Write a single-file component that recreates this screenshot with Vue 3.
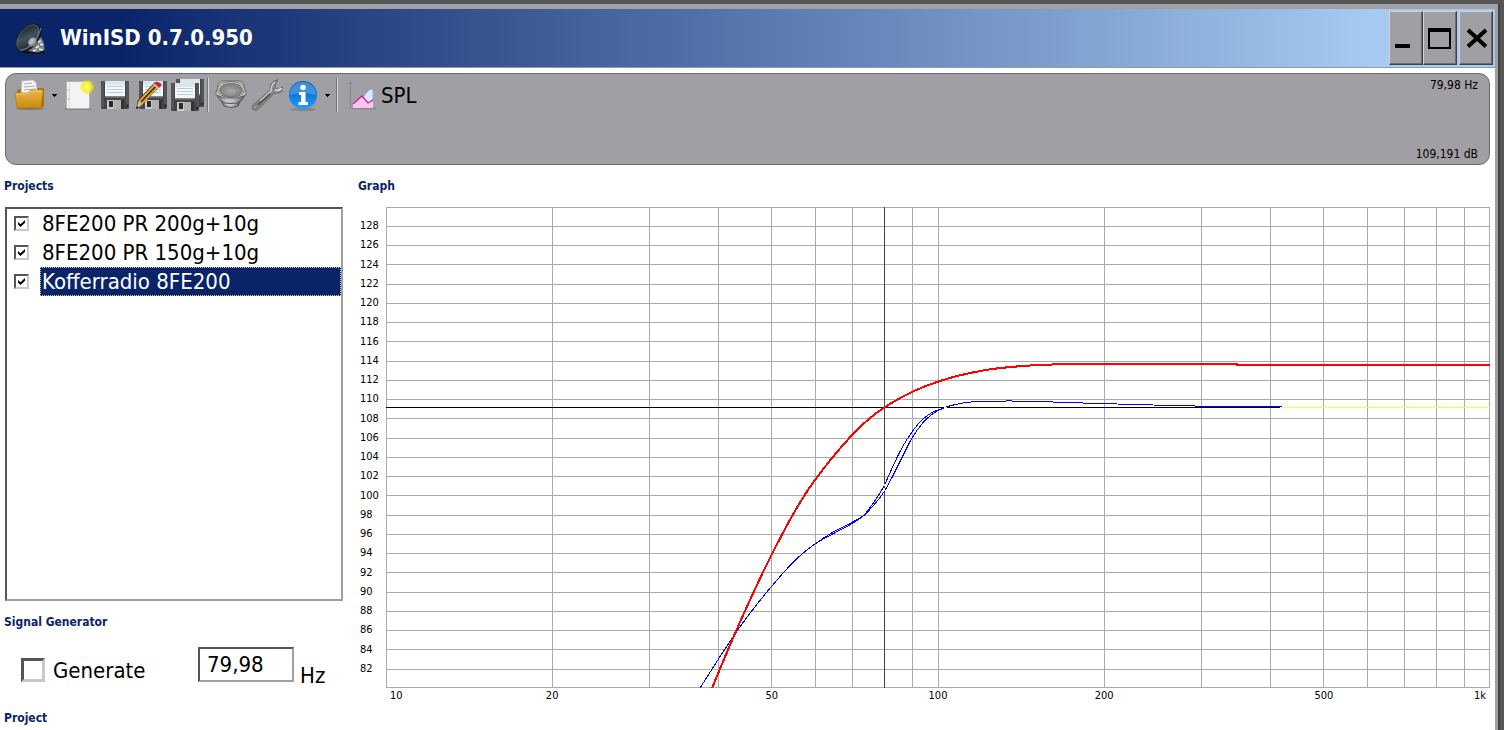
<script setup>
import { ref } from 'vue'

const projects = ref([
  { name: '8FE200 PR 200g+10g', shown: true },
  { name: '8FE200 PR 150g+10g', shown: true },
  { name: 'Kofferradio 8FE200', shown: true }
])
const selected = ref(2)
const generate = ref(false)
const frequency = ref('79,98')

const W = 1104
const H = 481
const xOf = (f) => Math.round((Math.log10(f) - 1) * 551.5) + 0.5
const freqs = [10, 20, 30, 40, 50, 60, 70, 80, 90, 100, 200, 300, 400, 500, 600, 700, 800, 900, 1000]
const vLines = freqs.filter((f) => f !== 80).map(xOf)
const levels = Array.from({ length: 24 }, (_, i) => 128 - 2 * i)
const yOf = (db) => Math.floor((130 - db) * 9.63) + 0.5
const hLines = [0.5, ...levels.map(yOf), 480.5]
const xLabels = [
  { text: '10', f: 10, edge: 'first' },
  { text: '20', f: 20 },
  { text: '50', f: 50 },
  { text: '100', f: 100 },
  { text: '200', f: 200 },
  { text: '500', f: 500 },
  { text: '1k', f: 1000, edge: 'last' }
].map((l) => ({ ...l, left: ((Math.log10(l.f) - 1) * 50) + '%' }))

// Cubic curve through the points, with tangents weighted by the spacing.
const smooth = (pts) => {
  const n = pts.length
  const slope = (i) => (pts[i + 1][1] - pts[i][1]) / (pts[i + 1][0] - pts[i][0])
  const tangent = (i) => {
    if (i === 0) return slope(0)
    if (i === n - 1) return slope(n - 2)
    const a = pts[i][0] - pts[i - 1][0]
    const b = pts[i + 1][0] - pts[i][0]
    return (slope(i - 1) * b + slope(i) * a) / (a + b)
  }
  let d = `M${pts[0][0]} ${pts[0][1]}`
  for (let i = 0; i < n - 1; i++) {
    const [x1, y1] = pts[i]
    const [x2, y2] = pts[i + 1]
    const h = (x2 - x1) / 3
    d += `C${x1 + h} ${y1 + tangent(i) * h} ${x2 - h} ${y2 - tangent(i + 1) * h} ${x2} ${y2}`
  }
  return d
}
const red = smooth([[326, 481], [350.5, 423], [385.5, 348], [418, 289], [446, 251], [484, 211], [526, 185], [553, 174.3], [600, 163], [647, 158.3], [700, 157], [760, 157], [851, 157]]) + 'V158H1104'
const head = [[314, 481], [332.5, 452], [351, 424], [385.5, 379.5], [412, 350.5], [429, 337]]
const tail = [[557, 201.3], [574, 196.5], [587, 194.8], [601, 194.2], [620, 194], [640, 194.2], [667, 195], [697, 196], [731, 197], [767, 198], [817, 199.2], [896, 199.5]]
const blueA = smooth([...head, [446, 327.3], [466, 316.5], [478, 308.3], [487, 299], [498.5, 284], [507, 268.5], [517, 248.5], [526, 231], [537, 215.7], [547, 206.5], ...tail])
const blueB = smooth([...head, [446, 325.7], [466, 315.3], [478, 308], [487, 296.5], [498.5, 278], [507, 259], [517, 239], [526, 225], [537, 212], [547, 205], ...tail])
</script>

<template>
  <div class="desktop">
    <div class="window">
      <header class="titlebar">
        <svg class="app-icon" viewBox="0 0 32 32" aria-hidden="true">
          <defs>
            <linearGradient id="cone" x1="0" y1="0" x2="1" y2="1">
              <stop offset="0" stop-color="#10161c" />
              <stop offset=".5" stop-color="#41535f" />
              <stop offset="1" stop-color="#161d24" />
            </linearGradient>
          </defs>
          <path d="M4 30 Q15 33 30 31 L30 26 L27 15 L18 20z" fill="#111" />
          <path d="M19 22 L27 15 L30 21 L30.500 28 L24 30.500 L14 29z" fill="#77828a" />
          <path d="M24 20l3-1M26 22l3 1M22 26l3-2M25 27l4 1M19 29l3-1" stroke="#eee" stroke-width="1.800" />
          <ellipse cx="14.500" cy="15.500" rx="10" ry="16" transform="rotate(38 14.500 15.500)" fill="#15191c" />
          <ellipse cx="13.800" cy="15.300" rx="8.300" ry="14.500" transform="rotate(38 13.800 15.300)" fill="url(#cone)" stroke="#606d74" stroke-width=".7" />
          <path d="M6 29 Q22 25 27 6" fill="none" stroke="#8a979d" stroke-width=".8" />
          <ellipse cx="18.500" cy="20" rx="4" ry="5" transform="rotate(38 18.500 20)" fill="#85898f" />
          <ellipse cx="17.800" cy="19.300" rx="2.500" ry="3.500" transform="rotate(38 17.800 19.300)" fill="#b9b8bc" />
        </svg>
        <h1 class="title">WinISD 0.7.0.950</h1>
        <div class="window-buttons">
          <button class="winbtn" type="button" aria-label="Minimize">
            <svg viewBox="0 0 24 24" aria-hidden="true"><path d="M1 18h15v4H1z" /></svg>
          </button>
          <button class="winbtn" type="button" aria-label="Maximize">
            <svg viewBox="0 0 24 24" aria-hidden="true"><path fill-rule="evenodd" d="M0 2h23v21H0z M2 6v15h19V6z" /></svg>
          </button>
          <button class="winbtn close" type="button" aria-label="Close">
            <svg viewBox="0 0 24 24" aria-hidden="true"><path d="M4 4L22 20.500M22 4L4 20.500" stroke="#000" stroke-width="4" /></svg>
          </button>
        </div>
      </header>

      <div class="toolbar">
        <div class="tools">
          <button class="tool" type="button" aria-label="Open project">
            <svg viewBox="0 0 32 32" aria-hidden="true">
              <defs>
                <linearGradient id="folder" x1="0" y1="0" x2="0" y2="1">
                  <stop offset="0" stop-color="#e9b54c" />
                  <stop offset="1" stop-color="#c88c0c" />
                </linearGradient>
              </defs>
              <ellipse cx="16" cy="29.500" rx="14" ry="1.500" fill="#77777b" />
              <path d="M3 13l1-3h4l2 3 12-4h7q1 0 1 1v18H3z" fill="#a8730c" />
              <path d="M7 15L8 2l11-1 3 3 2 12z" fill="#f7f7fb" stroke="#bcbcc4" stroke-width=".8" />
              <path d="M10 5l8-1M10 8l11-1M10 11l12-1" stroke="#a9a9b0" stroke-width="1" />
              <path d="M1 15q0-1 1-1h12l3-3h10q2 0 2 1l-2 16q0 1-1 1H4q-1 0-1-1z" fill="url(#folder)" stroke="#b67c0a" stroke-width=".8" />
              <path d="M2 15h12l3-3h11" fill="none" stroke="#f4cf7c" stroke-width="1" />
            </svg>
          </button>
          <button class="arrow" type="button" aria-label="Recent projects"><svg viewBox="0 0 5 3" aria-hidden="true"><path d="M0 0h5v1H4v1H3v1H2V2H1V1H0z" /></svg></button>
          <button class="tool" type="button" aria-label="New project">
            <svg viewBox="0 0 32 32" aria-hidden="true">
              <defs>
                <radialGradient id="glow"><stop offset="0" stop-color="#ffffb0" /><stop offset=".3" stop-color="#fff64a" /><stop offset=".65" stop-color="#f7ef12" stop-opacity=".85" /><stop offset="1" stop-color="#f0e800" stop-opacity="0" /></radialGradient>
              </defs>
              <path d="M2 29h26v1.500H2z" fill="#707074" />
              <path d="M3.500 2.500h23v27h-23z" fill="#f3f3f3" stroke="#b5b5b5" />
              <path d="M6.500 3v26" stroke="#dedede" />
              <circle cx="5.500" cy="11" r=".8" fill="#aaa" /><circle cx="5.500" cy="20" r=".8" fill="#aaa" />
              <circle cx="24" cy="8" r="7.500" fill="url(#glow)" />
            </svg>
          </button>
          <button class="tool" type="button" aria-label="Save">
            <svg viewBox="0 0 32 32" aria-hidden="true">
              <defs>
                <g id="floppy">
                  <path d="M2 2h27l1 1v26l-1 1H3l-1-1z" fill="#454547" />
                  <path d="M2 2h3v26H2zM27 2h3v23h-3z" fill="#555558" />
                  <path d="M6 2h20v15H6z" fill="#f4f7fa" />
                  <path d="M6 2h20v4H6z" fill="#dbe7f0" />
                  <path d="M8 7.500h16M8 10.500h16M8 13.500h16" stroke="#b9cddd" />
                  <path d="M6 17h20v1.500H6z" fill="#858588" />
                  <path d="M8 21h14v9H8z" fill="#c9c9c9" />
                  <path d="M10 22h4v6h-4z" fill="#29292b" />
                  <path d="M15 21h7v9h-7z" fill="#b0b0b1" />
                  <path d="M22 21h3v9h-3z" fill="#333335" />
                  <circle cx="28" cy="27" r="1" fill="#222" />
                </g>
              </defs>
              <use href="#floppy" />
            </svg>
          </button>
          <button class="tool" type="button" aria-label="Save as">
            <svg viewBox="0 0 32 32" aria-hidden="true">
              <use href="#floppy" x="2" />
              <path d="M1 30l2-9L20 3l5 4L8 25z" fill="#262522" />
              <path d="M4 21L20 4l4 3.500L8 25z" fill="#eba51b" />
              <path d="M6 23L22 6" stroke="#302b20" stroke-width="1.600" />
              <path d="M1 30l3-9 4 4z" fill="#e5bd7d" /><path d="M1 30l1-3 2 2z" fill="#111" />
              <path d="M19 5l2-2q1-1 4 1t1 3l-2 2z" fill="#d0202c" /><path d="M18 6l1.500-1.500 4.500 4-1.500 1.500z" fill="#bdbdbd" />
            </svg>
          </button>
          <button class="tool" type="button" aria-label="Save all">
            <svg viewBox="0 0 36 32" aria-hidden="true">
              <use href="#floppy" x="5" y="-2" />
              <use href="#floppy" x="0" y="2" />
            </svg>
          </button>
          <span class="separator"></span>
          <button class="tool" type="button" aria-label="Drivers">
            <svg viewBox="0 0 32 32" aria-hidden="true">
              <defs>
                <linearGradient id="metal" x1="0" x2="1"><stop offset="0" stop-color="#666" /><stop offset=".35" stop-color="#c9c9c9" /><stop offset=".6" stop-color="#bbb" /><stop offset="1" stop-color="#555" /></linearGradient>
              </defs>
              <path d="M6 21l3 6q7 3 14 0l3-6z" fill="url(#metal)" stroke="#4d4d4d" />
              <path d="M2 13l1 5q3 5 7 6 6 1 12 0 4-1 7-6l1-5z" fill="url(#metal)" stroke="#555" />
              <path d="M3 5l4-3h18l4 3v3l2 5v3l-3 1-6 2H10l-6-2-3-1v-3l2-5z" fill="#c6c6c6" stroke="#555" stroke-width=".8" />
              <ellipse cx="16" cy="10.500" rx="13.500" ry="8" fill="#dadada" stroke="#5d5d5d" stroke-width=".8" />
              <ellipse cx="16" cy="11" rx="11.500" ry="6.800" fill="#858585" stroke="#666" stroke-width=".8" />
              <ellipse cx="16" cy="12" rx="9" ry="5" fill="#909090" />
              <ellipse cx="16" cy="12" rx="5" ry="2.500" fill="#a2a2a2" />
            </svg>
          </button>
          <button class="tool" type="button" aria-label="Options">
            <svg viewBox="0 0 32 32" aria-hidden="true">
              <path d="M2.500 31q-2.500-1.500-1-4.500L19 11q0-7 4-9l4-1.500-3 6 1 3 3 1 4-3q0 5-3 6t-6 1L8 29.500q-3 3-5.500 1.500z" fill="#858585" stroke="#666" stroke-width=".8" />
              <path d="M9 22L20 12q0-6 4-9" fill="none" stroke="#d5d5d5" stroke-width="1.300" />
              <path d="M24 11l3 .5 4-2" fill="none" stroke="#e6e6e6" stroke-width="1.500" />
              <path d="M7 26L19 15" stroke="#555" stroke-width="1.800" />
              <circle cx="4" cy="28" r="1.300" fill="#ccc" stroke="#555" stroke-width=".6" />
            </svg>
          </button>
          <button class="tool" type="button" aria-label="Information">
            <svg viewBox="0 0 32 32" aria-hidden="true">
              <defs><linearGradient id="info" x1="0" y1="0" x2="0" y2="1"><stop offset="0" stop-color="#1666bb" /><stop offset=".5" stop-color="#0b79db" /><stop offset="1" stop-color="#22a0ff" /></linearGradient></defs>
              <ellipse cx="16" cy="30.500" rx="13" ry="1.500" fill="#828287" />
              <circle cx="16" cy="16" r="14" fill="url(#info)" />
              <path d="M3 16a13 13 0 0 1 26 0q-13-4-26 0z" fill="#6fb2ee" opacity=".5" />
              <circle cx="16" cy="8.500" r="2.800" fill="#fff" />
              <path d="M12 13h6.500v10H21v3h-9.500v-3H14v-7h-2z" fill="#fff" />
            </svg>
          </button>
          <button class="arrow" type="button" aria-label="More information"><svg viewBox="0 0 5 3" aria-hidden="true"><path d="M0 0h5v1H4v1H3v1H2V2H1V1H0z" /></svg></button>
          <span class="separator"></span>
          <button class="plot-type" type="button">
            <svg viewBox="0 0 28 30" aria-hidden="true">
              <path d="M1.500 2v26.500H27M0 4l1.500-2L3 4M25 27l2 1.500-2 1.500M0 8h1M0 13h1M0 18h1M0 23h1M6.500 29v1M11.500 29v1M16.500 29v1M21.500 29v1" fill="none" stroke="#87878c" />
              <path d="M14 17L19 11q2-2 5-2v11l-6 4z" fill="#dfe8ff" stroke="#75a4ee" stroke-width=".8" />
              <path d="M4 28v-5l9-7 6 7 5-3v8z" fill="#fbc4ea" />
              <path d="M4 24l9-8 6 7 5-3" fill="none" stroke="#cc1aa0" stroke-width="1.300" />
            </svg>
            <span>SPL</span>
          </button>
        </div>
        <div class="readout">
          <output>79,98 Hz</output>
          <output>109,191 dB</output>
        </div>
      </div>

      <main class="content">
        <aside class="side">
          <h2 class="caption">Projects</h2>
          <ul class="projects">
            <li v-for="(p, i) in projects" :key="p.name" class="project">
              <input :id="'show' + i" v-model="p.shown" class="tick" type="checkbox" />
              <label :for="'show' + i" class="name" :class="{ selected: i === selected }">{{ p.name }}</label>
            </li>
          </ul>
          <h2 class="caption second">Signal Generator</h2>
          <div class="generator">
            <input id="generate" v-model="generate" class="tick large" type="checkbox" />
            <label for="generate">Generate</label>
            <input id="freq" v-model="frequency" class="freq" type="text" />
            <label for="freq" class="unit">Hz</label>
          </div>
          <h2 class="caption third">Project</h2>
        </aside>

        <section class="graph">
          <h2 class="caption">Graph</h2>
          <div class="chart">
            <div class="y-axis"><span v-for="l in levels" :key="l">{{ l }}</span></div>
            <svg class="plot" :viewBox="`0 0 ${W} ${H}`" preserveAspectRatio="none" role="img" aria-label="SPL">
              <g class="grid">
                <line v-for="x in vLines" :key="'v' + x" :x1="x" :x2="x" y1="0" :y2="H" />
                <line v-for="y in hLines" :key="'h' + y" x1="0" :x2="W" :y1="y" :y2="y" />
              </g>
              <path class="cursor-v" d="M498.500 0V481" />
              <path class="cursor-h" d="M0 200.500H894" />
              <path class="cursor-over" d="M896 200.500H1104" />
              <path class="blue" :d="blueA" />
              <path class="blue" :d="blueB" />
              <path class="red" :d="red" />
              <path class="cursor-over" d="M498.500 277v2M498.500 281v3M558 200.500h3" />
            </svg>
            <div class="x-axis">
              <span v-for="l in xLabels" :key="l.f" :class="l.edge" :style="{ left: l.left }">{{ l.text }}</span>
            </div>
          </div>
        </section>
      </main>
    </div>
  </div>
</template>

<style>
body { margin: 0; background: #555; }
</style>

<style scoped>
.desktop {
  box-sizing: border-box;
  height: 100vh;
  padding: 4px 4px 0 0;
  overflow: hidden;
  background: #555;
  color: #000;
  font-family: "DejaVu Sans Condensed", "DejaVu Sans", sans-serif;
  font-size: 22px;
}
.window {
  box-sizing: border-box;
  min-height: 100%;
  margin-right: 2px;
  border-top: 5px solid #a09fa4;
  border-right: 3px solid #a09fa4;
  box-shadow: 2px 0 0 #414043;
  background: #fff;
}
.titlebar {
  display: flex;
  align-items: center;
  height: 58px;
  padding: 0 2px 0 14px;
  border-bottom: 1px solid #8c9ab5;
  background: linear-gradient(90deg, #0a246a 8%, #a6caf0 92%);
}
.app-icon { width: 32px; height: 32px; }
.title { margin: 0 0 0 14px; color: #fff; font-size: 22px; line-height: 28px; font-weight: 700; }
.window-buttons { display: flex; margin-left: auto; }
.winbtn {
  box-sizing: border-box;
  display: grid;
  place-items: center;
  width: 34px;
  height: 54px;
  padding: 0;
  border: 1px solid;
  border-color: #d4d0d8 #414043 #414043 #d4d0d8;
  box-shadow: inset -1px -1px 0 #6b6b70;
  border-radius: 0;
  background: #a09fa4;
}
.winbtn svg { width: 24px; height: 24px; }
.close { margin-left: 2px; }
.toolbar {
  display: flex;
  justify-content: space-between;
  box-sizing: border-box;
  height: 92px;
  margin: 5px 5px 0;
  padding: 4px 11px 3px 6px;
  border: 1px solid #6b6a70;
  border-radius: 11px;
  background: #a09fa4;
}
.tools { display: flex; align-items: center; height: 34px; }
.tool, .arrow, .plot-type { padding: 0; border: 0; background: none; color: inherit; font: inherit; }
.tool { display: flex; justify-content: center; width: 36px; height: 32px; }
.tool svg { height: 32px; }
.arrow { display: grid; place-items: center; width: 13px; height: 32px; }
.arrow svg { width: 5px; height: 3px; }
.separator { width: 1px; height: 34px; margin: 0 4px 0 2px; border-left: 1px solid #747378; background: #d8d8dc; }
.plot-type { display: flex; align-items: center; gap: 4px; margin-left: 7px; }
.plot-type svg { width: 28px; height: 30px; }
.readout { display: flex; flex-direction: column; justify-content: space-between; text-align: right; font-size: 12px; line-height: 14px; }
.content { display: flex; }
.side { box-sizing: border-box; width: 343px; flex: none; padding-left: 5px; }
.caption { margin: 0; padding: 14px 0; color: #0a246a; font-size: 12px; line-height: 14px; font-weight: 700; }
.side .caption { margin-left: -1px; }
.projects {
  box-sizing: border-box;
  height: 394px;
  margin: 0;
  padding: 0;
  list-style: none;
  border: 2px solid;
  border-color: #555459 #a09fa4 #a09fa4 #555459;
}
.project { display: flex; align-items: center; height: 29px; padding-left: 7px; }
.tick {
  appearance: none;
  box-sizing: border-box;
  flex: none;
  display: grid;
  place-items: center;
  width: 15px;
  height: 15px;
  margin: 0;
  border: 2px solid;
  border-color: #555459 #c8c7cc #c8c7cc #555459;
  background: #fff;
}
.tick:checked::after { content: ""; width: 7px; height: 7px; background: #000; clip-path: polygon(0 30%, 35% 60%, 100% 0, 100% 40%, 35% 100%, 0 65%); }
.tick.large { width: 24px; height: 24px; border-width: 3px; }
.name { box-sizing: border-box; flex: 1; margin-left: 11px; padding-left: 1px; border: 1px solid transparent; line-height: 27px; }
.name.selected { border: 1px dotted #d9c88f; background: #0a246a; color: #fff; }
.second { padding: 14px 0 18px; }
.generator { display: flex; align-items: center; height: 35px; padding-left: 16px; }
.generator label { margin-left: 8px; padding-top: 12px; }
.generator .large { margin-top: 10px; }
.freq {
  box-sizing: border-box;
  width: 96px;
  height: 35px;
  margin: 0 0 0 auto;
  padding: 0 7px;
  border: 2px solid;
  border-color: #555459 #a09fa4 #a09fa4 #555459;
  border-radius: 0;
  background: #fff;
  font: inherit;
}
.generator .unit { width: 37px; margin-right: 6px; margin-left: 6px; padding-top: 22px; }
.third { padding: 29px 0 0; }
.graph { flex: 1; min-width: 0; padding: 0 5px 0 15px; }
.chart { display: grid; grid-template-columns: 28px 1fr; }
.y-axis {
  box-sizing: border-box;
  display: flex;
  flex-direction: column;
  justify-content: space-between;
  height: 481px;
  padding: 12px 0 12px 2px;
  font-size: 11px;
  line-height: 14px;
}
.plot { display: block; width: 100%; height: 481px; overflow: hidden; }
.plot * { vector-effect: non-scaling-stroke; shape-rendering: crispEdges; }
.grid line { stroke: #aaa; stroke-width: 1; }
.cursor-v, .cursor-h, .cursor-over { fill: none; stroke: #000; stroke-width: 1; }
.cursor-v { stroke: #444; }
.cursor-over { stroke: #ff2; }
.blue { fill: none; stroke: #00f; stroke-width: 1; }
.red { fill: none; stroke: #f00; stroke-width: 2; }
.x-axis { grid-column: 2; position: relative; height: 14px; margin-top: 1px; font-size: 11px; line-height: 14px; }
.x-axis span { position: absolute; top: 0; transform: translateX(-50%); }
.x-axis .first { transform: none; padding-left: 4px; }
.x-axis .last { transform: translateX(-100%); padding-right: 4px; }
</style>
